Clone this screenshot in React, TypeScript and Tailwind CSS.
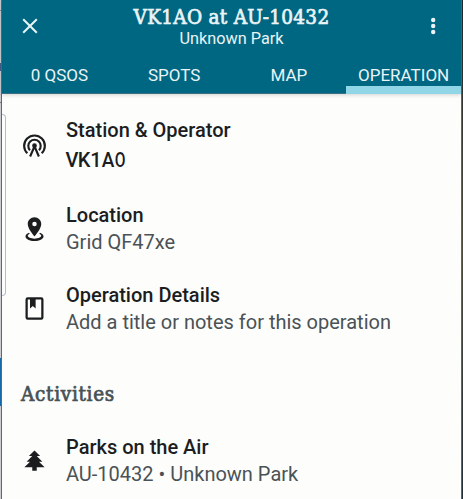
import React from "react";

const slab =
  "font-['DejaVu_Serif_Condensed','DejaVu_Serif',serif] [font-stretch:condensed] font-normal [-webkit-text-stroke:0.7px_currentColor]";

const paths = {
  marker:
    "M12,2C15.31,2 18,4.66 18,7.95C18,12.41 12,19 12,19S6,12.41 6,7.95C6,4.66 8.69,2 12,2M12,6A2,2 0 0,0 10,8A2,2 0 0,0 12,10A2,2 0 0,0 14,8A2,2 0 0,0 12,6M20,19C20,21.21 16.42,23 12,23C7.58,23 4,21.21 4,19C4,17.71 5.22,16.56 7.11,15.83L7.75,16.74C6.67,17.19 6,17.81 6,18.5C6,19.88 8.69,21 12,21C15.31,21 18,19.88 18,18.5C18,17.81 17.33,17.19 16.25,16.74L16.89,15.83C18.78,16.56 20,17.71 20,19Z",
  book: "M18,2A2,2 0 0,1 20,4V20A2,2 0 0,1 18,22H6A2,2 0 0,1 4,20V4A2,2 0 0,1 6,2H18M18,4H13V12L10.5,9.75L8,12V4H6V20H18V4Z",
  tree: "M10,21V18H3L8,13H5L10,8H7L12,3L17,8H14L19,13H16L21,18H14V21H10Z",
};

function Glyph({ d }: { d: string }) {
  return (
    <svg viewBox="0 0 24 24" className="mb-[2px] size-[27px] fill-current">
      <path d={d} />
    </svg>
  );
}

function Antenna() {
  return (
    <svg viewBox="0 0 24 24" className="mb-[3px] size-[27px]" fill="none" stroke="currentColor" strokeWidth="1.9">
      <path d="M5.6 18.9A9.2 9.2 0 1 1 18.4 18.9" />
      <path d="M8 16.2A5.5 5.5 0 1 1 16 16.2" />
      <circle cx="12" cy="12.2" r="2.1" fill="currentColor" stroke="none" />
      <path d="M8.1 21.8L12 12.8L15.9 21.8" />
    </svg>
  );
}

function Row({ icon, title, children }: { icon: React.ReactNode; title: string; children: React.ReactNode }) {
  return (
    <div className="flex items-center pl-[19.4px] text-[#1b1d1f]">
      <div className="w-[44.6px] shrink-0">{icon}</div>
      <div className="text-[20px] leading-[27px] whitespace-nowrap">
        <div className="font-medium">{title}</div>
        {children}
      </div>
    </div>
  );
}

export default function App() {
  return (
    <div className="flex h-[499px] w-[463px] overflow-hidden bg-[#fdfdfc] font-[Roboto,sans-serif]">
      <div className="flex w-[2px] shrink-0 flex-col border-r border-[#2479bd] bg-[#c9cbd0]">
        <div className="h-[11px] border-b border-[#888]" />
        <div className="h-[52px]" />
        <div className="h-[8px] bg-[#455e87]" />
        <div className="h-[32px] border-b border-[#777]" />
        <div className="h-[255px]" />
        <div className="h-[48px] bg-[#1769aa]" />
      </div>
      <main className="relative w-[459px] shrink-0">
        <header className="h-[94px] border-b border-[#3c7184] bg-[#006782] text-[#eaf4f6] shadow-[0_1px_4px_rgba(0,0,0,0.18)]">
          <div className="flex h-[56px] justify-between">
            <svg viewBox="0 0 24 24" className="mt-[14px] ml-[16px] size-6" stroke="currentColor" strokeWidth="2">
              <path d="M5.2 5.2L18.8 18.8M18.8 5.2L5.2 18.8" />
            </svg>
            <div className="flex w-[220px] flex-col items-center whitespace-nowrap">
              <h1 className={slab + " mt-[5px] h-[25px] text-[20.5px] leading-[25px] tracking-[0.3px]"}>VK1AO at AU-10432</h1>
              <p className="text-[16.3px] leading-[17px]">Unknown Park</p>
            </div>
            <svg viewBox="0 0 24 24" className="mt-[14px] mr-[16px] size-6 fill-current">
              <circle cx="12.2" cy="6" r="2.2" />
              <circle cx="12.2" cy="12" r="2.2" />
              <circle cx="12.2" cy="18" r="2.2" />
            </svg>
          </div>
          <nav className="grid h-[38px] grid-cols-4 text-center text-[17px] leading-[38px] whitespace-nowrap">
            <span>0 QSOS</span>
            <span>SPOTS</span>
            <span>MAP</span>
            <span className="h-[38px] border-b-8 border-[#90d6e7]">OPERATION</span>
          </nav>
        </header>
        <div className="pt-[23px]">
          <Row icon={<Antenna />} title="Station & Operator">
            <div className="flex h-[33px] items-center font-medium">
              <span className="flex w-3 justify-center">V</span>
              <span className="flex w-3 justify-center">K</span>
              <span className="flex w-3 justify-center">1</span>
              <span className="flex w-3 scale-x-95 justify-center">A</span>
              <span className="flex w-3 scale-x-[0.78] justify-center">O</span>
            </div>
          </Row>
          <div className="h-[25px]" />
          <Row icon={<Glyph d={paths.marker} />} title="Location">
            <div className="text-[#4a5256]">Grid QF47xe</div>
          </Row>
          <div className="h-[26px]" />
          <Row icon={<Glyph d={paths.book} />} title="Operation Details">
            <div className="text-[#4a5256]">Add a title or notes for this operation</div>
          </Row>
          <h2 className={slab + " mt-[46px] ml-[19px] h-[25px] text-[20.5px] leading-[25px] tracking-[0.7px] text-[#465156]"}>Activities</h2>
          <div className="h-[27px]" />
          <Row icon={<Glyph d={paths.tree} />} title="Parks on the Air">
            <div className="text-[#4a5256]">AU-10432 • Unknown Park</div>
          </Row>
        </div>
        <div className="absolute top-[114px] left-0 h-[182px] w-[4px] rounded-r-[4px] border border-l-0 border-[#b8bcc5]" />
      </main>
      <div className="w-[2px] shrink-0 border-l border-[#1878bd] bg-gradient-to-b from-[#24282c] via-[#504d39] to-[#202e3b]" />
    </div>
  );
}
